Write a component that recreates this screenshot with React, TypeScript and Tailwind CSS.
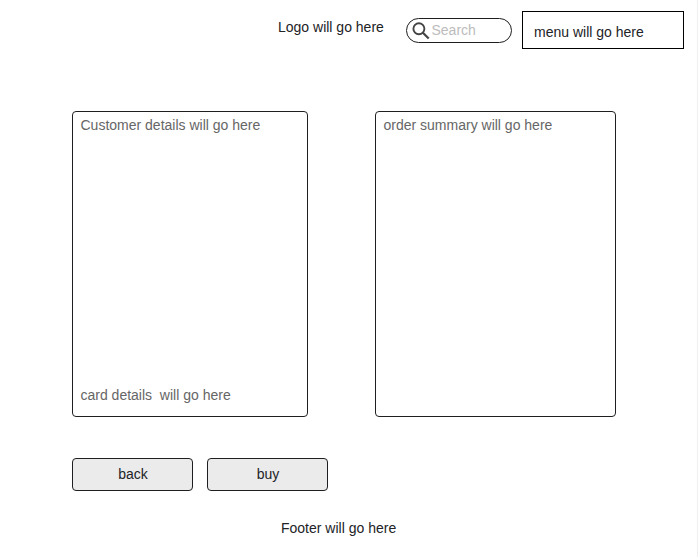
import React from "react";

function Header() {
  return (
    <header className="flex h-[49px] items-start pl-[278px] text-[#222326]">
      <div className="mt-[17px] w-32 leading-5">Logo will go here</div>
      <label className="mt-[18px] flex h-[25px] w-[106px] items-start rounded-full border border-[#1f1f22] pl-[5px]">
        <svg className="mt-[3px] h-[18px] w-[18px] shrink-0" viewBox="0 0 18 18" fill="none" stroke="#444444" strokeWidth="1.9">
          <circle cx="6.9" cy="6.7" r="5.5" />
          <path d="M10.9 10.7 16.7 16.5" strokeWidth="2.2" />
        </svg>
        <span className="mt-px ml-[1.5px] leading-5 text-[#bcbcbc]">Search</span>
      </label>
      <nav className="mt-[11px] ml-[10px] h-[38px] w-[162px] border border-black pt-[10px] pl-[11px] leading-5">
        menu will go here
      </nav>
    </header>
  );
}

function ActionButton({ label }: { label: string }) {
  return (
    <button className="h-[33px] w-[121px] rounded-[4px] border border-[#1f1f22] bg-[#ebebeb] pb-[2px] pl-px leading-5 text-[#222326]">
      {label}
    </button>
  );
}

export default function App() {
  return (
    <div className="flex h-[557px] w-[698px] flex-col overflow-hidden border-r border-[#f0f0f0] bg-white font-['Liberation_Sans',Arial,sans-serif] text-sm">
      <Header />
      <main className="mt-[62px] pl-[72px]">
        <div className="flex gap-[67px] text-[#666666]">
          <section className="flex h-[306px] w-[236px] flex-col justify-between rounded-[4px] border border-[#1f1f22] pt-[3px] pr-2 pb-[11px] pl-[7.5px] leading-5">
            <p>Customer details will go here</p>
            <p className="whitespace-pre">{"card details  will go here"}</p>
          </section>
          <section className="h-[306px] w-[241px] rounded-[4px] border border-[#1f1f22] pt-[3px] pl-[7.5px] leading-5">
            <p>order summary will go here</p>
          </section>
        </div>
        <div className="mt-[41px] flex gap-[14px]">
          <ActionButton label="back" />
          <ActionButton label="buy" />
        </div>
      </main>
      <footer className="mt-[27px] pl-[281px] leading-5 text-[#222326]">Footer will go here</footer>
    </div>
  );
}
